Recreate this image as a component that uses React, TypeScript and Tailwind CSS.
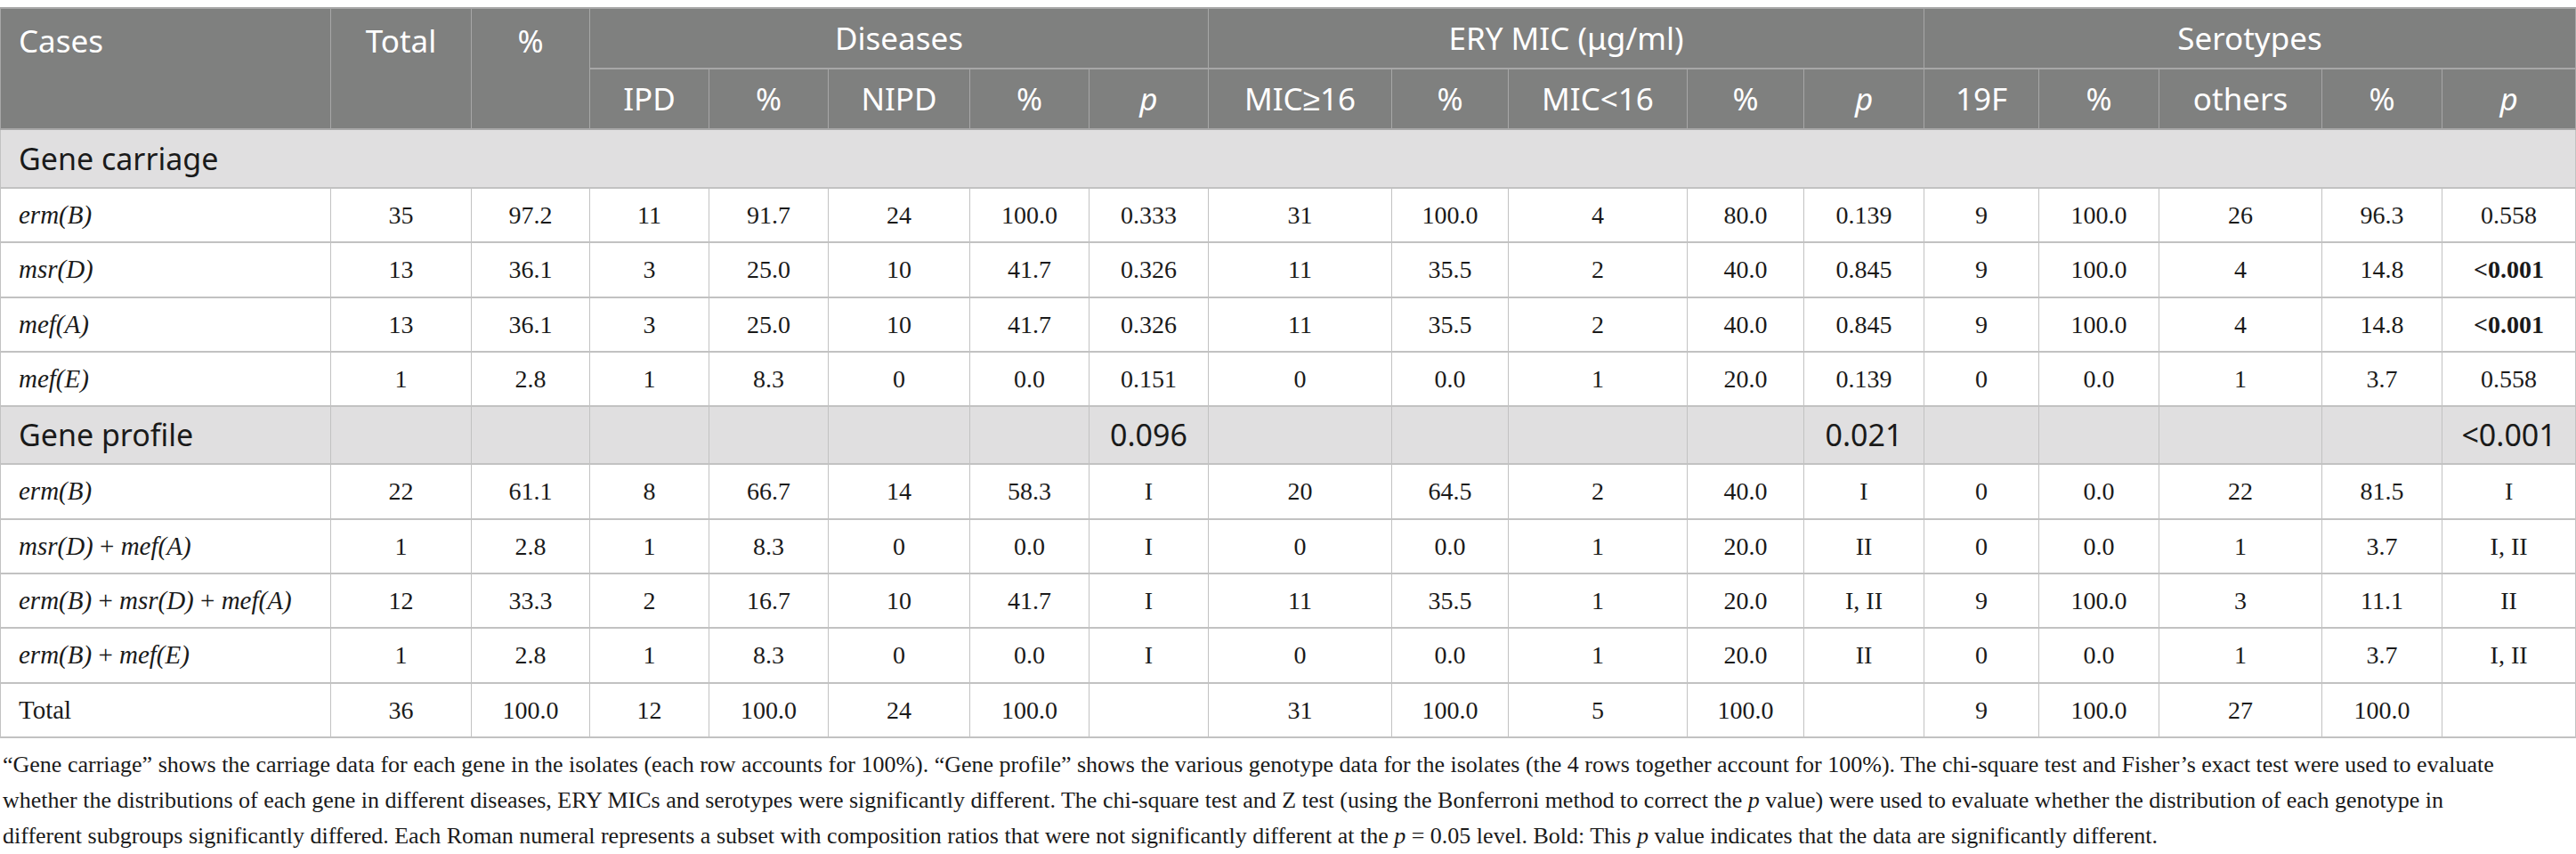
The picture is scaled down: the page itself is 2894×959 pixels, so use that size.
import React from 'react';

type Cell = React.ReactNode;

const sans = "font-['Noto_Sans',sans-serif]";

const G = ({ children }: { children: React.ReactNode }) => <i>{children}</i>;

type Row = { label: React.ReactNode; vals: Cell[]; tall?: boolean };

const carriage: Row[] = [
  { label: <G>erm(B)</G>, vals: ['35', '97.2', '11', '91.7', '24', '100.0', '0.333', '31', '100.0', '4', '80.0', '0.139', '9', '100.0', '26', '96.3', '0.558'] },
  { label: <G>msr(D)</G>, tall: true, vals: ['13', '36.1', '3', '25.0', '10', '41.7', '0.326', '11', '35.5', '2', '40.0', '0.845', '9', '100.0', '4', '14.8', <b key="b">&lt;0.001</b>] },
  { label: <G>mef(A)</G>, vals: ['13', '36.1', '3', '25.0', '10', '41.7', '0.326', '11', '35.5', '2', '40.0', '0.845', '9', '100.0', '4', '14.8', <b key="b">&lt;0.001</b>] },
  { label: <G>mef(E)</G>, vals: ['1', '2.8', '1', '8.3', '0', '0.0', '0.151', '0', '0.0', '1', '20.0', '0.139', '0', '0.0', '1', '3.7', '0.558'] },
];

const profile: Row[] = [
  { label: <G>erm(B)</G>, tall: true, vals: ['22', '61.1', '8', '66.7', '14', '58.3', 'I', '20', '64.5', '2', '40.0', 'I', '0', '0.0', '22', '81.5', 'I'] },
  { label: <><G>msr(D)</G> + <G>mef(A)</G></>, vals: ['1', '2.8', '1', '8.3', '0', '0.0', 'I', '0', '0.0', '1', '20.0', 'II', '0', '0.0', '1', '3.7', 'I, II'] },
  { label: <><G>erm(B)</G> + <G>msr(D)</G> + <G>mef(A)</G></>, vals: ['12', '33.3', '2', '16.7', '10', '41.7', 'I', '11', '35.5', '1', '20.0', 'I, II', '9', '100.0', '3', '11.1', 'II'] },
  { label: <><G>erm(B)</G> + <G>mef(E)</G></>, tall: true, vals: ['1', '2.8', '1', '8.3', '0', '0.0', 'I', '0', '0.0', '1', '20.0', 'II', '0', '0.0', '1', '3.7', 'I, II'] },
  { label: 'Total', vals: ['36', '100.0', '12', '100.0', '24', '100.0', '', '31', '100.0', '5', '100.0', '', '9', '100.0', '27', '100.0', ''] },
];

// p values shown on the "Gene profile" band, keyed by value column
const profileP: Record<number, string> = { 6: '0.096', 11: '0.021', 16: '<0.001' };

const DataRow = ({ label, vals, tall }: Row) => (
  <tr className={tall ? 'h-[62px]' : 'h-[61px]'}>
    <td className="border-x border-b-2 border-[#c2c2c2] pl-[20px] text-left text-[29px]">{label}</td>
    {vals.map((v, i) => (
      <td key={i} className="border-x border-b-2 border-[#c2c2c2] text-center text-[28px]">
        {v}
      </td>
    ))}
  </tr>
);

export default function App() {
  const th = `border-x border-b-2 border-[#a7a7a7] font-normal text-[35px] ${sans}`;
  return (
    <div className="w-[2894px] h-[959px] bg-white pt-[8px] text-[#1a1a1a] font-['Liberation_Serif',serif]">
      <table className="table-fixed border-collapse w-[2893px]">
        <colgroup>
          <col className="w-[371px]" />
          <col className="w-[158px]" />
          <col className="w-[133px]" />
          <col className="w-[134px]" />
          <col className="w-[134px]" />
          <col className="w-[159px]" />
          <col className="w-[134px]" />
          <col className="w-[134px]" />
          <col className="w-[206px]" />
          <col className="w-[131px]" />
          <col className="w-[201px]" />
          <col className="w-[131px]" />
          <col className="w-[135px]" />
          <col className="w-[129px]" />
          <col className="w-[135px]" />
          <col className="w-[183px]" />
          <col className="w-[135px]" />
          <col className="w-[150px]" />
        </colgroup>
        <thead className="bg-[#7f807f] text-white">
          <tr className="h-[68px] border-t-2 border-[#a7a7a7]">
            <th rowSpan={2} className={`${th} align-top text-left pl-[20px] pt-[10px]`}>Cases</th>
            <th rowSpan={2} className={`${th} align-top text-center pt-[10px]`}>Total</th>
            <th rowSpan={2} className={`${th} align-top text-center pt-[10px]`}>%</th>
            <th colSpan={5} className={`${th} text-center`}>Diseases</th>
            <th colSpan={5} className={`${th} text-center`}>ERY MIC (μg/ml)</th>
            <th colSpan={5} className={`${th} text-center`}>Serotypes</th>
          </tr>
          <tr className="h-[68px]">
            {['IPD', '%', 'NIPD', '%', 'p', 'MIC≥16', '%', 'MIC<16', '%', 'p', '19F', '%', 'others', '%', 'p'].map((h, i) => (
              <th key={i} className={`${th} text-center`}>
                {h === 'p' ? <i>p</i> : h}
              </th>
            ))}
          </tr>
        </thead>
        <tbody>
          <tr className="h-[66px] bg-[#e0dfe0]">
            <td colSpan={18} className={`border-x border-b-2 border-[#c2c2c2] pl-[20px] text-[34px] ${sans}`}>
              Gene carriage
            </td>
          </tr>
          {carriage.map((r, i) => (
            <DataRow key={i} {...r} />
          ))}
          <tr className="h-[65px] bg-[#e0dfe0]">
            <td className={`border-x border-b-2 border-[#c2c2c2] pl-[20px] text-[34px] ${sans}`}>Gene profile</td>
            {Array.from({ length: 17 }).map((_, i) => (
              <td key={i} className={`border-x border-b-2 border-[#c2c2c2] text-center text-[34px] ${sans}`}>
                {profileP[i] ?? ''}
              </td>
            ))}
          </tr>
          {profile.map((r, i) => (
            <DataRow key={i} {...r} />
          ))}
        </tbody>
      </table>
      <p className="mt-[10px] pl-[3px] text-[26px] leading-[40px] text-[#1a1a1a]">
        “Gene carriage” shows the carriage data for each gene in the isolates (each row accounts for 100%). “Gene profile” shows the various genotype data for the isolates (the 4 rows together account for 100%). The chi-square test and Fisher’s exact test were used to evaluate
        <br />
        whether the distributions of each gene in different diseases, ERY MICs and serotypes were significantly different. The chi-square test and Z test (using the Bonferroni method to correct the <i>p</i> value) were used to evaluate whether the distribution of each genotype in
        <br />
        different subgroups significantly differed. Each Roman numeral represents a subset with composition ratios that were not significantly different at the <i>p</i> = 0.05 level. Bold: This <i>p</i> value indicates that the data are significantly different.
      </p>
    </div>
  );
}
